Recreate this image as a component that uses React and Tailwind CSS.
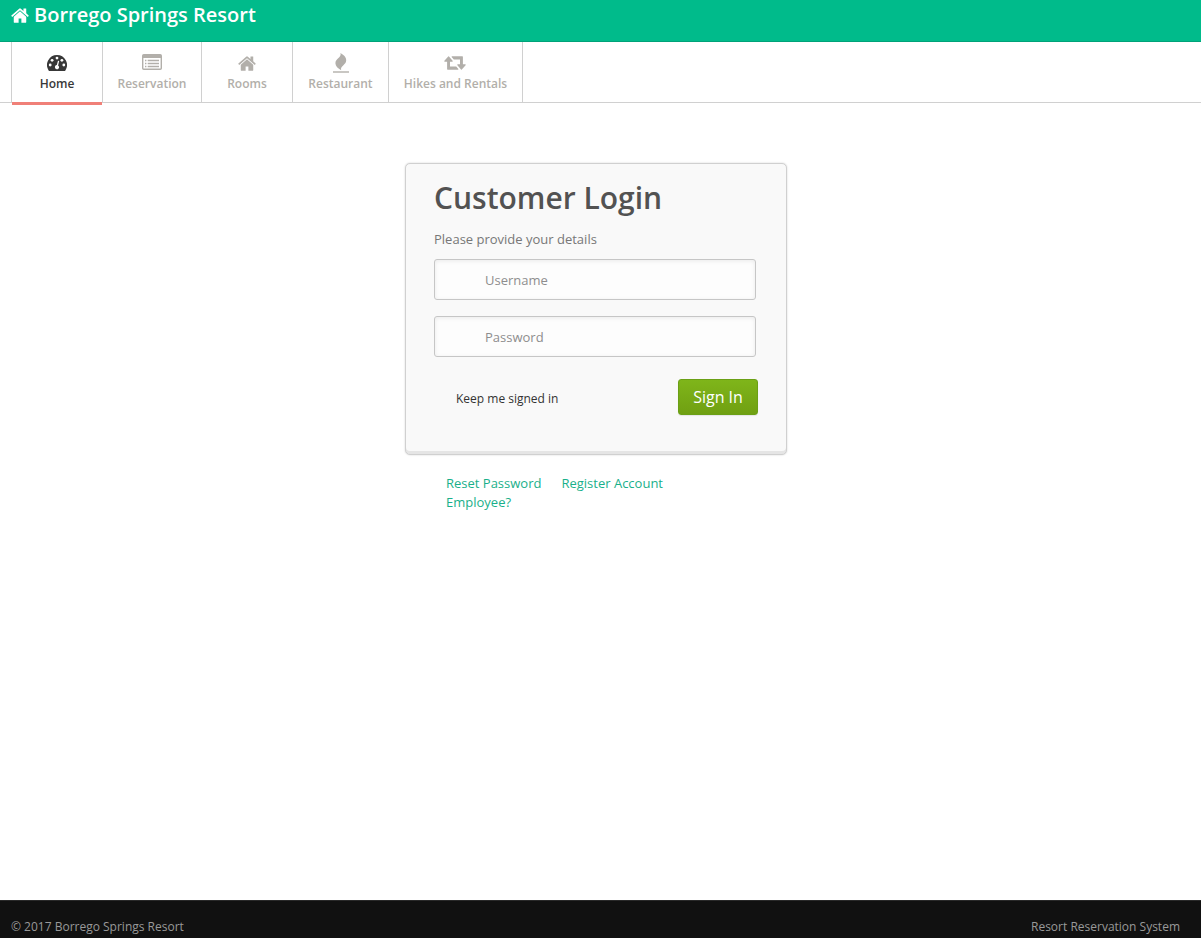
import React from "react";

const HomeIcon = ({ className }) => (
  <svg className={className} viewBox="64 220 1664 1330" preserveAspectRatio="none" fill="currentColor">
    <path d="M1472 992v480q0 26-19 45t-45 19h-384v-384h-256v384h-384q-26 0-45-19t-19-45v-480q0-1 .5-3t.5-3l575-474 575 474q1 2 1 6zm223-69l-62 74q-8 9-21 11h-3q-13 0-21-7l-692-577-692 577q-12 8-24 7-13-2-21-11l-62-74q-8-10-7-23.5t11-21.5l719-599q32-26 76-26t76 26l244 204v-195q0-14 9-23t23-9h192q14 0 23 9t9 23v408l219 182q10 8 11 21.5t-7 23.5z" />
  </svg>
);

const DashboardIcon = () => (
  <svg className="mr-px h-4 w-5" viewBox="0 0 20 16">
    <path fill="currentColor" d="M10 0A10 10 0 0 0 1.6 15.4Q2 16 2.6 16H17.4Q18 16 18.4 15.4A10 10 0 0 0 10 0Z" />
    <g fill="#fff">
      <circle cx="3.2" cy="10" r="1.4" />
      <circle cx="5.1" cy="5.3" r="1.4" />
      <circle cx="10" cy="3.1" r="1.4" />
      <circle cx="14.9" cy="5.3" r="1.4" />
      <circle cx="16.8" cy="10" r="1.4" />
      <path d="M11 5.8 12.2 6.1 11.1 10.4A2.1 2.1 0 1 1 9.8 10.1Z" />
    </g>
  </svg>
);

const ListIcon = () => (
  <svg className="mb-[2px] h-4 w-5" viewBox="0 0 20 16">
    <path fill="currentColor" fillRule="evenodd" d="M1.8 0H18.2Q20 0 20 1.8V14.2Q20 16 18.2 16H1.8Q0 16 0 14.2V1.8Q0 0 1.8 0ZM1.4 4V14.1Q1.4 14.6 1.9 14.6H18.1Q18.6 14.6 18.6 14.1V4Z" />
    <path stroke="currentColor" strokeWidth="1.3" d="M3 6.5H4.4M5.7 6.5H17M3 9.5H4.4M5.7 9.5H17M3 12.5H4.4M5.7 12.5H17" />
  </svg>
);

const FireIcon = () => (
  <svg className="mb-px h-5 w-4" viewBox="0 0 16 20" fill="currentColor">
    <path d="M7.4 0C9 4.6 2.4 5.2 2.4 10.2C2.4 13.2 5 15.4 8.2 17.2C6.9 12.8 13.2 12 13.2 7.2C13.2 4 10.6 1.8 7.4 0Z" />
    <path d="M0 18.3H16V19.7H0Z" />
  </svg>
);

const RetweetIcon = () => (
  <svg className="mr-px h-[14px] w-[22px]" viewBox="0 0 22 14" fill="currentColor">
    <path d="M4.2 0.4Q4.6 0 5 0.4L8.6 4.7Q9.1 5.6 8.2 5.7H6V10.5H12.2L14.4 13.1Q14.6 13.7 14 13.7H3.6Q3.1 13.7 3.1 13.1V5.7H.8Q-.1 5.6.4 4.7Z" />
    <path d="M17.8 13.6Q17.4 14 17 13.6L13.4 9.3Q12.9 8.4 13.8 8.3H16V3.5H9.8L7.6.9Q7.4.3 8 .3H18.4Q18.9.3 18.9.9V8.3H21.2Q22.1 8.4 21.6 9.3Z" />
  </svg>
);

function NavItem({ icon, label, width, active }) {
  return (
    <li className={"relative h-[60px] border-r border-[#d0d0d0] " + width + (active ? " text-[#383838]" : " text-[#b2afaa]")}>
      <a href="#" className="flex h-full flex-col items-center">
        <span className="flex h-[42px] items-center justify-center">{icon}</span>
        <span className="-mt-2 text-xs leading-4 font-semibold whitespace-nowrap">{label}</span>
      </a>
      {active && <span className="absolute top-[60px] left-0 h-[3px] w-[90px] bg-[#f08078]" />}
    </li>
  );
}

export default function App() {
  return (
    <div className="flex h-[938px] flex-col overflow-hidden bg-white font-['Open_Sans',sans-serif]">
      <header className="h-[42px] shrink-0 border-b border-[#00a279] bg-[#00bb8b] px-[11px] text-white">
        <h1 className="flex items-center text-xl leading-[30px] font-semibold whitespace-nowrap">
          <HomeIcon className="mr-[5px] h-[15px] w-[18px]" />
          Borrego Springs Resort
        </h1>
      </header>

      <nav className="h-[61px] shrink-0 border-b border-[#d0d0d0] pl-[11px]">
        <ul className="flex">
          <li className="h-[60px] w-px bg-[#d0d0d0]" />
          <NavItem active label="Home" width="w-[91px]" icon={<DashboardIcon />} />
          <NavItem label="Reservation" width="w-[99px]" icon={<ListIcon />} />
          <NavItem label="Rooms" width="w-[91px]" icon={<HomeIcon className="h-[15px] w-[18px]" />} />
          <NavItem label="Restaurant" width="w-[96px]" icon={<FireIcon />} />
          <NavItem label="Hikes and Rentals" width="w-[134px]" icon={<RetweetIcon />} />
        </ul>
      </nav>

      <main className="flex-1 pt-[60px] pl-[405px]">
        <form className="h-[292px] w-[382px] rounded-[5px] border border-[#d0d0d0] bg-[#f9f9f9] px-7 shadow-[inset_0_-3px_0_#e5e5e5,0_0_2px_rgba(0,0,0,0.18)]">
          <h2 className="pt-4 text-[30px] leading-9 font-semibold text-[#525252]">Customer Login</h2>
          <p className="mt-[14px] text-[13px] leading-[18px] text-[#777]">Please provide your details</p>
          <input
            placeholder="Username"
            className="mt-[11px] block h-[41px] w-[322px] rounded-[3px] border border-[#c6c6c6] bg-[#fdfdfd] pl-[50px] text-[13px] shadow-[inset_0_1px_4px_rgba(0,0,0,0.08)] placeholder:text-[#8e8d8e]"
          />
          <input
            type="password"
            placeholder="Password"
            className="mt-4 block h-[41px] w-[322px] rounded-[3px] border border-[#c6c6c6] bg-[#fdfdfd] pl-[50px] text-[13px] shadow-[inset_0_1px_4px_rgba(0,0,0,0.08)] placeholder:text-[#8e8d8e]"
          />
          <div className="mt-[22px] -mr-1 flex w-[324px] justify-between">
            <label className="pt-[11px] pl-[22px] text-xs leading-[18px] text-[#333]">Keep me signed in</label>
            <button type="button" className="h-9 w-20 rounded-[3px] border border-[#6ba016] bg-linear-to-b from-[#7fb51a] to-[#70a012] text-base text-white shadow-[0_1px_1px_rgba(0,0,0,0.08)]">
              Sign In
            </button>
          </div>
        </form>
        <div className="mt-[19px] pl-[41px] text-[13px] leading-[19px] text-[#19b08a]">
          <div className="flex gap-5">
            <a href="#">Reset Password</a>
            <a href="#">Register Account</a>
          </div>
          <a href="#">Employee?</a>
        </div>
      </main>

      <footer className="flex h-[38px] shrink-0 justify-between border-t border-[#292929] bg-[#111] pt-[17px] pr-[21px] pl-[11px] text-xs leading-[18px] text-[#999]">
        <span>© 2017 Borrego Springs Resort</span>
        <span>Resort Reservation System</span>
      </footer>
    </div>
  );
}
